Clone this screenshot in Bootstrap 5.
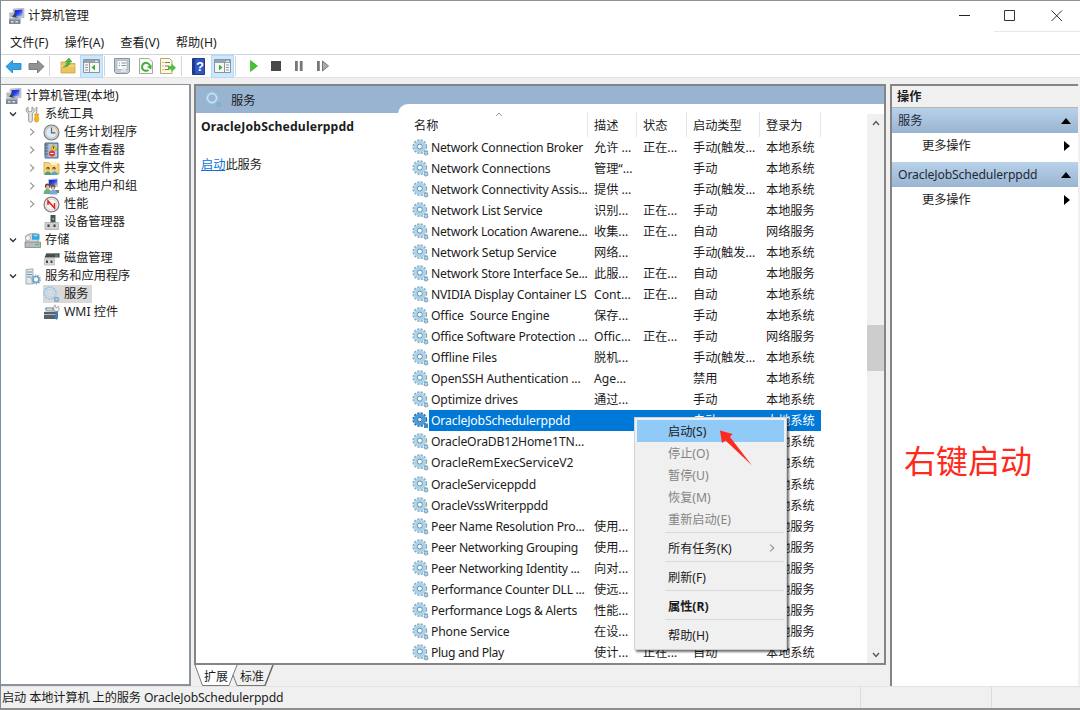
<!DOCTYPE html>
<html lang="zh-CN">
<head>
<meta charset="utf-8">
<meta name="viewport" content="width=device-width, initial-scale=1">
<title>计算机管理</title>
<link href="https://cdn.jsdelivr.net/npm/bootstrap@5.3.0/dist/css/bootstrap.min.css" rel="stylesheet">
<style>
html,body{height:100%;overflow:hidden}
body{font-family:"Noto Sans","Noto Sans CJK SC",sans-serif;font-size:12.2px;line-height:18px;color:#1c1c1c;background:#f0f0f0;white-space:nowrap}
svg{display:block;flex:none}
.win{width:1080px;height:710px;border-left:1px solid #7d8d9c;border-top:1px solid #929292;border-bottom:2px solid #8e8e8e}
.win>*{flex:none}
.titlebar{height:31px;padding-left:7px;background:#fff}
.titlebar .caps{gap:33px;padding-right:17px}
.capline{width:86px;height:1px;background:#e8e8e8;margin-left:auto}
.menus{height:22px;background:#fff;padding-left:9px;gap:16px}
.menus span{letter-spacing:.08px}
.tools{height:24px;background:#fff;border-top:1px solid #d3d3dc;border-bottom:1px solid #e3e3e3}
.tool{width:23px;height:23px;display:flex;align-items:center;justify-content:center}
.tool.on{background:#cce8ff;border:1px solid #b3dbf8}
.vline{width:1px;height:20px;background:#d5d5d5}
.tree{width:190px;height:602px;margin-top:6px;border:1px solid #8d939b;border-width:1px 2px 2px 0;background:#fff;padding-top:2px}
.node{height:18.03px}
.chev{width:8px}
.mid{width:692px;margin:6px 0 0 3px}
.pane{height:581px;border:2px solid #858585;background:#fff}
.head{height:27px;background:#99b4d1;padding-left:9px}
.info{width:202px;padding:0 0 0 5px}
.svc{width:486px;height:559px;margin-top:-9px;background:#fff;border-top-left-radius:10px;position:relative}
.list{width:470px}
.cols{height:33px;padding-top:8px}
.cols>div{height:25px;padding-top:5px;border-right:1px solid #e5e5e5}
.c0{width:190px}.c1{width:49px;padding-left:6px}.c2{width:50px;padding-left:6px}.c3{width:73px;padding-left:6px}.c4{width:61px;padding-left:6px}
.rowline{height:21.04px;line-height:21px;padding-left:14px}
.rowline .nm{width:159px;padding-left:2px}
.rowline.sel>div{background:#0078d7;color:#fff}
.scroll{width:17px;margin-top:10px;background:#f0f0f0;padding:6px 0 5px}
.thumb{width:17px;height:46px;background:#cdcdcd}
.acts{width:188px;height:602px;margin:6px 0 0 4px;border-left:2px solid #858585;border-top:2px solid #858585;background:#fff}
.acthead{height:22px;background:#f0f0f0;border-bottom:1px solid #b5b5b5;padding-left:5px}
.band{height:25px;background:linear-gradient(#b9d1ea,#99b4d1);padding:0 7px 0 6px;color:#1f2a36}
.more{height:25px;padding:0 8px 0 30px}
.ctx{position:absolute;left:236px;top:313px;width:153px;height:233px;background:#f0f0f0;border:1px solid #d2d2d2;box-shadow:2px 2px 2px rgba(0,0,0,.55);padding:2px;z-index:3}
.ctx .it{height:22px;line-height:23px;padding-left:31px}
.ctx .off{color:#858585}
.ctx .on{background:#91c9f7}
.ctx hr{margin:2px 0 4px 28px;border:0;border-top:1px solid #d9d9d9;opacity:1}
.redtip{position:absolute;left:84px;top:12px}
.note{color:#ff2a1c;font-size:32px;line-height:40px;margin:229px 0 0 12px}
.status{height:22px;border-top:1px solid #e2e2e2;padding-left:1px}
.status i{width:1px;height:21px;background:#dcdcdc}
</style>
</head>
<body>
<svg width="0" height="0" class="position-absolute">
<defs>
<linearGradient id="bl" x1="0" y1="0" x2="1" y2="1"><stop offset="0" stop-color="#0a1cb8"/><stop offset=".5" stop-color="#2b45e2"/><stop offset="1" stop-color="#bcd4fa"/></linearGradient>
<symbol id="gear" viewBox="0 0 17 17"><circle cx="7.800" cy="7.600" r="6.500" fill="none" stroke="#84abc4" stroke-width="1.800" stroke-dasharray="2.200 1.200"/><circle cx="7.800" cy="7.600" r="4.400" fill="none" stroke="#add3e9" stroke-width="3.600"/><circle cx="7.800" cy="7.600" r="2.500" fill="#fff" stroke="#5a8bab" stroke-width="1"/><path d="M12 11.500h4v4.500h-4z" fill="#9cc0d6"/><circle cx="14" cy="14" r="1.800" fill="#b5d5e6" stroke="#7ba1ba" stroke-width="1.300" stroke-dasharray="1.300 .7"/></symbol>
<symbol id="gearsel" viewBox="0 0 17 17"><circle cx="7.800" cy="7.600" r="6.500" fill="none" stroke="#246da9" stroke-width="1.800" stroke-dasharray="2.200 1.200"/><circle cx="7.800" cy="7.600" r="4.400" fill="none" stroke="#4a9bd8" stroke-width="3.600"/><circle cx="7.800" cy="7.600" r="2.300" fill="#d8ecfb" stroke="#17609f" stroke-width="1"/><path d="M12 11.500h4v4.500h-4z" fill="#3c8ac8"/></symbol>
<symbol id="gearlt" viewBox="0 0 17 17"><circle cx="7" cy="7" r="6" fill="none" stroke="#94bcd8" stroke-width="1.300" stroke-dasharray="1.900 1.200"/><circle cx="7" cy="7" r="4.700" fill="none" stroke="#a4cce8" stroke-width="2.400"/><circle cx="7" cy="7" r="4.500" fill="none" stroke="#d6ecfa" stroke-width=".9"/><circle cx="13.500" cy="13.500" r="1.900" fill="none" stroke="#86aec9" stroke-width="1.700"/></symbol>
<symbol id="pc" viewBox="0 0 17 17"><path d="M5 1l11-.8v9.300l-10 .7z" fill="#c8ccd4" stroke="#9a9fa8" stroke-width=".5"/><path d="M6.500 2.200l8-.6v6.600l-7.500.6z" fill="url(#bl)"/><path d="M1.300 4.500h3.800v5H1.300z" fill="#b7bbc1"/><path d="M4 9l3-4.500 1 4.500 3 1z" fill="#39424d"/><path d="M1 10.500h11.500V16H1z" fill="#7d8993"/><path d="M1 10.500h11.500v1.300H1z" fill="#a5afb8"/><path d="M3 13h2.500v1.500H3zM7.500 13H10v1.500H7.500z" fill="#d7e0e6"/></symbol>
<symbol id="tools" viewBox="0 0 17 17"><path d="M4 1v4l2 1 2-1V1c3 1.500 3 5 .3 6.400V15c0 1.600-3.600 1.600-3.600 0V7.400C1.500 6 1.500 2.500 4 1z" fill="#e7e7e7" stroke="#8b8b8b" stroke-width=".9"/><path d="M11.500 1h2l-.3 7h-1.400z" fill="#aaa"/><path d="M10.500 8h4.200l-.6 2 .8 4-1.200 2h-2.200l-1.200-2 .8-4z" fill="#f3b71f" stroke="#d7930c" stroke-width=".6"/></symbol>
<symbol id="clock" viewBox="0 0 17 17"><circle cx="8.500" cy="8.500" r="7.500" fill="#d9d9d6" stroke="#777" stroke-width="1.100"/><circle cx="8.500" cy="8.500" r="5.700" fill="#dfe9f5" stroke="#a9a9a9" stroke-width=".6"/><path d="M8.500 8.500V3.200a5.300 5.300 0 0 1 5 5.300z" fill="#f7dfae"/><path d="M8.500 3.500v5.300h4" fill="none" stroke="#456b95" stroke-width="1.200"/></symbol>
<symbol id="event" viewBox="0 0 17 17"><path d="M2 1h13v15H2z" fill="#8da2be" stroke="#546c8e"/><path d="M5.500 2H14v13H5.500z" fill="#b4c6dd"/><path d="M1.500 3h3M1.500 6h3M1.500 9h3M1.500 12h3" stroke="#445b7b"/><path d="M10.500 2.500l3.500 5.500H7.500z" fill="#ffd51f" stroke="#b58b00" stroke-width=".6"/><path d="M10.500 4.500v2" stroke="#222"/><circle cx="9" cy="11.500" r="3" fill="#d93a3a"/><path d="M7.500 11.500h3" stroke="#fff"/></symbol>
<symbol id="share" viewBox="0 0 17 17"><path d="M1 4V2.500h5l1 1.500h9v10H1z" fill="#f4d77f" stroke="#cf9f32" stroke-width=".7"/><path d="M8 1.500h6V5H8z" fill="#fff2be"/><circle cx="5" cy="8.500" r="1.700" fill="#7a4e30"/><circle cx="11" cy="8.500" r="1.700" fill="#7a4e30"/><path d="M1.500 15q.5-3.500 3.500-3.500t3.500 3.500z" fill="#46a478"/><path d="M8 15q.5-3.500 3.500-3.500t3.500 3.500z" fill="#55a7c5"/><circle cx="4.600" cy="9.600" r="1.200" fill="#e9b889"/><circle cx="10.600" cy="9.600" r="1.200" fill="#e9b889"/></symbol>
<symbol id="users" viewBox="0 0 17 17"><path d="M5 1l10-.7v8.500L5 10z" fill="#c4cad2"/><path d="M6 2l8-.6v6L6 8z" fill="url(#bl)"/><path d="M10 12h6v3h-6z" fill="#737b83"/><circle cx="4.500" cy="8" r="2.600" fill="#6b432b"/><circle cx="10" cy="9" r="2.400" fill="#754d31"/><path d="M.5 16q.5-5 4-5t4.500 5z" fill="#69b184"/><path d="M6.500 16.500q1-5 4-5t4 5z" fill="#78a9da"/><circle cx="4.700" cy="9" r="1.700" fill="#eabf98"/><circle cx="10" cy="10" r="1.600" fill="#eabf98"/></symbol>
<symbol id="perf" viewBox="0 0 17 17"><circle cx="8.500" cy="8.500" r="7.400" fill="#fff" stroke="#858585" stroke-width="1.400"/><circle cx="8.500" cy="8.500" r="5.500" fill="#fdf6f5" stroke="#c6b5b3" stroke-width=".7"/><path d="M5 9V5l6.500 7V7" fill="none" stroke="#d32323" stroke-width="1.500"/></symbol>
<symbol id="dev" viewBox="0 0 17 17"><path d="M7.500 1h5v8h-5z" fill="#4d5256"/><path d="M9.500 4H11v2H9.500z" fill="#5ad85a"/><path d="M2 8.500h13.500v7H2z" fill="#d1d1d3" stroke="#a5a5a5" stroke-width=".7"/><path d="M4.500 10.500h2v2.500h-2zM10.500 10.500h2v2.500h-2z" fill="#3b3b3b"/></symbol>
<symbol id="stor" viewBox="0 0 17 17"><path d="M1.500 4q5-4 13-2v7l-3 2H2z" fill="#d4d7da" stroke="#8c9092" stroke-width=".7"/><path d="M8 2.200h7.500v5.500H8z" fill="#31a7dd"/><path d="M9 3l5.500-.2-3 2.200z" fill="#90dcf7"/><circle cx="4" cy="6" r="2.500" fill="#f6f6f6" stroke="#9b9b9b" stroke-width=".6"/><path d="M1 10h15.500v5.500H1z" fill="#b6b9bd" stroke="#767a7e" stroke-width=".7"/><path d="M11.500 12.500H15" stroke="#38cf38" stroke-width="1.300"/></symbol>
<symbol id="disk" viewBox="0 0 17 17"><path d="M3.500 3h13v4.500h-15z" fill="#45494d"/><path d="M3.500 3h13v1.300H3z" fill="#888"/><path d="M12 6h3" stroke="#3bea3b"/><path d="M1.500 8.500h10V15h-10z" fill="#d8d8d8" stroke="#aaa" stroke-width=".6"/><path d="M3 10.500h2V13H3zM7.500 10.500h2V13h-2z" fill="#454545"/></symbol>
<symbol id="app" viewBox="0 0 17 17"><path d="M2 1.500L9 .8V16H2z" fill="#dfe7ec" stroke="#83909b" stroke-width=".7"/><path d="M3 4h5M3 6.500h5M3 9h4.500" stroke="#7f929f"/><circle cx="12" cy="11.500" r="3" fill="#fff" stroke="#709fc4" stroke-width="1.700"/><circle cx="12" cy="11.500" r="4.400" fill="none" stroke="#7da8c8" stroke-width="1.200" stroke-dasharray="1.500 1.200"/></symbol>
<symbol id="wmi" viewBox="0 0 17 17"><path d="M3 6V4h7v2" fill="none" stroke="#707a83" stroke-width="1.200"/><path d="M1.500 7.500L4 5.500h11V8z" fill="#a8b1ba"/><path d="M1 8h12v7H1z" fill="#54606b"/><path d="M1 10.500h12" stroke="#b1bac4"/><path d="M12 .8l1 3 2.500-1.300C17 5.500 15 7.500 15 7.500h-2.500C10 6 10 2.500 12 .8z" fill="#eee" stroke="#888" stroke-width=".7"/><path d="M12.200 7.500H15V14l-1.400 2-1.400-2z" fill="#3c7dc0"/></symbol>
<symbol id="down" viewBox="0 0 8 8"><path d="M1 2.500l3 3 3-3" fill="none" stroke="#333" stroke-width="1.400"/></symbol>
<symbol id="right" viewBox="0 0 8 8"><path d="M2.200.6L5.800 4 2.200 7.400" fill="none" stroke="#929292" stroke-width="1.100"/></symbol>
<symbol id="panel" viewBox="0 0 17 14"><path d="M.5.5h16v13H.5z" fill="#f7f7f7" stroke="#8a949d"/><path d="M1 1h15v3H1z" fill="#98a2ab"/><path d="M12 2.300h3" stroke="#fff"/></symbol>
</defs></svg>

<div class="win d-flex flex-column">
  <header class="titlebar">
    <div class="d-flex align-items-center" style="height:30px">
    <svg width="17" height="17"><use href="#pc"/></svg><span style="margin-left:3px">计算机管理</span>
    <div class="caps d-flex ms-auto align-items-center">
      <svg width="12" height="12"><path d="M0 5.500h11" stroke="#222"/></svg>
      <svg width="13" height="12"><path d="M.5.500h10v10h-10z" fill="none" stroke="#333"/></svg>
      <svg width="13" height="12"><path d="M1.500 .5l10.500 10.500M12 .5L1.500 11" stroke="#333" fill="none"/></svg>
    </div></div>
    <div class="capline"></div>
  </header>
  <nav class="menus d-flex align-items-center"><span>文件(F)</span><span>操作(A)</span><span>查看(V)</span><span>帮助(H)</span></nav>
  <div class="tools d-flex align-items-center">
    <svg width="17" height="15" viewBox="0 0 17 15" style="margin-left:4px"><path d="M1 7.500L7.500 1.500V4.500H16v6H7.500V14z" fill="#35a4e4" stroke="#1c7fc0" stroke-width=".8"/></svg>
    <svg width="17" height="15" viewBox="0 0 17 15" style="margin-left:6px"><path d="M16 7.500L9.500 1.500V4.500H1v6h8.500V14z" fill="#929292" stroke="#6b6b6b" stroke-width=".8"/></svg>
    <div class="vline" style="margin-left:4px"></div>
    <svg width="16" height="16" viewBox="0 0 16 16" style="margin-left:10px"><path d="M1 4h4l1 1.500h9V15H1z" fill="#edc35b" stroke="#c9983a" stroke-width=".7"/><path d="M1 8h14" stroke="#f9e3a1"/><path d="M3 9q4-1 4-5H5l4-4 3 4h-2q0 5-7 5z" fill="#45b738" stroke="#2d8a25" stroke-width=".4"/></svg>
    <div class="tool on" style="margin-left:4px"><svg width="17" height="14"><use href="#panel"/><path d="M6.500 4v9" stroke="#8a949d"/><path d="M2 6h3M2 8.500h3M2 11h3" stroke="#899"/><path d="M12 5.500v6L8.500 8.500z" fill="#3cb034"/></svg></div>
    <div class="vline" style="margin-left:1px"></div>
    <svg width="16" height="16" viewBox="0 0 16 16" style="margin-left:9px"><path d="M.5.5h15v13l-2 2H2l-1.500-2z" fill="#c2ccd5" stroke="#87929c"/><path d="M3 2.500h10v9H3z" fill="#fafafa" stroke="#98a3ad" stroke-width=".6"/><path d="M5 5h1M7.500 5H12M5 7.500h1M7.500 7.500H12" stroke="#7894ac"/><path d="M6 14l4-5 3 5z" fill="#dfe5e9"/></svg>
    <svg width="14" height="16" viewBox="0 0 14 16" style="margin-left:9px"><path d="M.5.500H10L13.500 4v11.500H.5z" fill="#fbfbfb" stroke="#a7a7a7"/><path d="M9.500 12A4 4 0 1 1 10.800 7.500" fill="none" stroke="#42ad37" stroke-width="2"/><path d="M12.500 6.500v5L8 9z" fill="#42ad37"/></svg>
    <svg width="16" height="16" viewBox="0 0 16 16" style="margin-left:7px"><path d="M.5.500h9L12 3v12.500H.5z" fill="#fff9df" stroke="#b5a873"/><path d="M2.500 4.500h1M5 4.500h5M2.500 8h1M5 8h4M2.500 11.500h1M5 11.500h4" stroke="#777"/><path d="M8 8h3.500V5.500L16 9.800 11.500 14v-2.500H8z" fill="#55bb42"/></svg>
    <div class="vline" style="margin-left:5px"></div>
    <svg width="13" height="17" viewBox="0 0 13 17" style="margin-left:10px"><path d="M.5.500h12v16H.5z" fill="#3158c2" stroke="#223b88"/><path d="M1 1h2v15H1z" fill="#203b8b"/><text x="4" y="13" font-size="13" font-weight="700" fill="#fff" font-family="Liberation Sans">?</text></svg>
    <div class="tool on" style="margin-left:6px"><svg width="17" height="14"><use href="#panel"/><path d="M10.500 4v9" stroke="#8a949d"/><path d="M12 6h3M12 8.500h3M12 11h3" stroke="#899"/><path d="M5 5.500v6l3.500-3z" fill="#3cb034"/></svg></div>
    <div class="vline" style="margin-left:1px"></div>
    <svg width="84" height="14" viewBox="0 0 84 14" style="margin-left:14px"><path d="M.5 1.500l7 5.500-7 5.500z" fill="#44c22f" stroke="#2ea31e" stroke-width=".6"/><path d="M21 2h10v10H21z" fill="#484848"/><path d="M45 2h2.800v10H45zM49.800 2h2.800v10h-2.800z" fill="#777"/><path d="M67 2h2.800v10H67z" fill="#777"/><path d="M72.500 2l6 5-6 5z" fill="#aaa" stroke="#777"/></svg>
  </div>

  <main class="d-flex align-items-start">
    <aside class="tree" id="tree"></aside>
    <section class="mid">
      <div class="pane">
        <div class="head d-flex align-items-center"><svg width="17" height="17"><use href="#gearlt"/></svg><span style="margin-left:9px;padding-top:2px">服务</span></div>
        <div class="d-flex">
          <div class="info"><div class="fw-bold" style="margin-top:5px;letter-spacing:.16px">OracleJobSchedulerppdd</div><div style="margin-top:20px"><u style="color:#0b73d8">启动</u>此服务</div></div>
          <div class="svc d-flex">
            <div class="list">
              <div class="cols d-flex position-relative"><div class="c0" style="padding-left:16px">名称</div><div class="c1">描述</div><div class="c2">状态</div><div class="c3">启动类型</div><div class="c4">登录为</div>
              <svg class="position-absolute" style="left:97px;top:8px" width="8" height="5"><path d="M1 4l3-3 3 3" fill="none" stroke="#999"/></svg></div>
              <div id="rows"></div>
            </div>
            <div class="scroll d-flex flex-column align-items-center"><svg width="8" height="6"><path d="M1 5l3-3.500L7 5" fill="none" stroke="#555" stroke-width="1.300"/></svg><div class="thumb" style="margin-top:199px"></div><svg class="mt-auto" width="8" height="6"><path d="M1 1l3 3.500L7 1" fill="none" stroke="#555" stroke-width="1.300"/></svg></div>
            <div class="ctx">
              <div class="it on">启动(S)</div><div class="it off">停止(O)</div><div class="it off">暂停(U)</div><div class="it off">恢复(M)</div><div class="it off">重新启动(E)</div><hr>
              <div class="it d-flex align-items-center justify-content-between">所有任务(K)<svg width="8" height="8" style="margin-right:8px"><use href="#right"/></svg></div><hr>
              <div class="it">刷新(F)</div><hr><div class="it fw-bold">属性(R)</div><hr><div class="it">帮助(H)</div>
              <svg class="redtip" width="34" height="37"><path d="M1 .5l12.500 3.500-2.500 3L33 35.500 6.500 10.500 3 13z" fill="#ff2a1c"/></svg>
            </div>
          </div>
        </div>
      </div>
      <svg width="90" height="21"><path d="M1 0l7.500 20.500H36L43 1V0z" fill="#fff"/><path d="M1 0l7.500 20.500H35L43 0M39 10l4 10.500h28.500" fill="none" stroke="#777"/><path d="M71 20.500L79 0" stroke="#666" stroke-width="1.500"/><text x="10" y="15.500" font-size="12" fill="#1c1c1c">扩展</text><text x="46" y="15.500" font-size="12" fill="#1c1c1c">标准</text></svg>
    </section>
    <aside class="acts">
      <div class="acthead fw-bold d-flex align-items-center">操作</div>
      <div class="band d-flex align-items-center justify-content-between">服务<svg width="10" height="6"><path d="M0 6l5-6 5 6z"/></svg></div>
      <div class="more d-flex align-items-center justify-content-between">更多操作<svg width="6" height="10"><path d="M0 0l6 5-6 5z"/></svg></div>
      <div class="band d-flex align-items-center justify-content-between" style="margin-top:4px"><span style="letter-spacing:-.13px">OracleJobSchedulerppdd</span><svg width="10" height="6"><path d="M0 6l5-6 5 6z"/></svg></div>
      <div class="more d-flex align-items-center justify-content-between">更多操作<svg width="6" height="10"><path d="M0 0l6 5-6 5z"/></svg></div>
      <div class="note">右键启动</div>
    </aside>
  </main>
  <footer class="status d-flex align-items-center"><span style="letter-spacing:-.12px;padding-top:1px">启动 本地计算机 上的服务 OracleJobSchedulerppdd</span><i class="ms-auto"></i><i style="margin:0 88px 0 130px"></i></footer>
</div>
<script src="https://cdn.jsdelivr.net/npm/bootstrap@5.3.0/dist/js/bootstrap.bundle.min.js"></script>
<script>
const use = (id, w = 17) => `<svg width="${w}" height="${w}"><use href="#${id}"/></svg>`;
const nodes = [[-1,'','pc','计算机管理(本地)'],[0,'down','tools','系统工具'],[1,'right','clock','任务计划程序'],[1,'right','event','事件查看器'],[1,'right','share','共享文件夹'],[1,'right','users','本地用户和组'],[1,'right','perf','性能'],[1,'','dev','设备管理器'],[0,'down','stor','存储'],[1,'','disk','磁盘管理'],[0,'down','app','服务和应用程序'],[1,'','gearlt','服务'],[1,'','wmi','WMI 控件']];
document.getElementById('tree').innerHTML = nodes.map(([d, c, i, t]) =>
  `<div class="node d-flex align-items-center" style="padding-left:${d < 0 ? 4 : 8 + d * 19}px">${d < 0 ? '' : `<div class="chev">${c ? use(c, 8) : ''}</div>`}` +
  `<div class="d-flex align-items-center" style="height:18px;margin-left:${d < 0 ? 0 : 7}px;${t === '服务' ? 'background:#d9d9d9;' : ''}padding-right:4px">${use(i)}<span style="margin-left:4px">${t}</span></div></div>`).join('');
const S = '本地系统', L = '本地服务', N = '网络服务', R = '正在...', H = '手动', A = '自动', T = '手动(触发...';
// name, name width in px, description, status, startup type, log on as
const rows = [
['Network Connection Broker',151,'允许 ...',R,T,S],['Network Connections',118.5,'管理“...','',H,S],['Network Connectivity Assis...',155.5,'提供 ...','',T,S],['Network List Service',110.5,'识别...',R,H,L],
['Network Location Awarene...',155.5,'收集...',R,A,N],['Network Setup Service',124.5,'网络...','',T,S],['Network Store Interface Se...',155.5,'此服...',R,A,L],['NVIDIA Display Container LS',154.5,'Cont...',R,A,S],
['Office  Source Engine',117.5,'保存...','',H,S],['Office Software Protection ...',155.5,'Offic...',R,H,N],['Offline Files',65,'脱机...','',T,S],['OpenSSH Authentication ...',148.5,'Age...','','禁用',S],
['Optimize drives',86,'通过...','',H,S],['OracleJobSchedulerppdd',138,'','',A,S],['OracleOraDB12Home1TN...',152,'','','',S],['OracleRemExecServiceV2',141.5,'','','',S],['OracleServiceppdd',104,'','','',S],['OracleVssWriterppdd',116,'','','',S],
['Peer Name Resolution Pro...',152.5,'使用...','','',L],['Peer Networking Grouping',146,'使用...','','',L],['Peer Networking Identity ...',147.5,'向对...','','',L],['Performance Counter DLL ...',152.5,'使远...','','',L],['Performance Logs & Alerts',145,'性能...','','',L],['Phone Service',77.5,'在设...','','',L],['Plug and Play',72,'使计...',R,A,S]];
document.getElementById('rows').innerHTML = rows.map((r, i) => {
  const s = i === 13;
  return `<div class="rowline d-flex align-items-center${s ? ' sel' : ''}">${use(s ? 'gearsel' : 'gear', 17)}` +
  `<div class="nm"><span style="white-space:pre">${r[0].replace('&', '&amp;')}</span></div>` +
  r.slice(2).map((t, k) => `<div class="c${k + 1}">${t || '&nbsp;'}</div>`).join('') + '</div>';
}).join('');
document.querySelectorAll('.nm span').forEach((e, i) => {
  e.style.letterSpacing = (rows[i][1] + 1 - e.getBoundingClientRect().width) / rows[i][0].length + 'px';
});
</script>
</body>
</html>
